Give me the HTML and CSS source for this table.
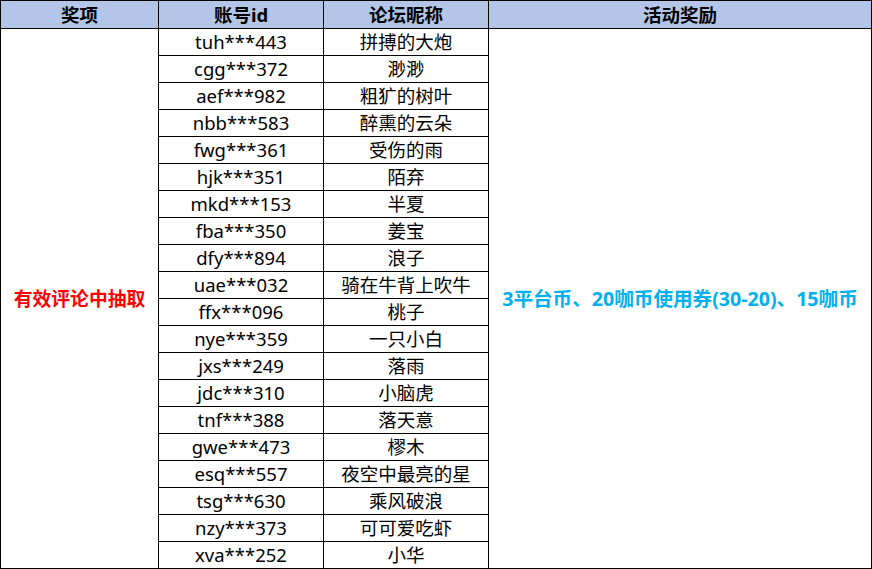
FILE: index.html
```html
<!DOCTYPE html>
<html lang="zh-CN">
<head>
<meta charset="utf-8">
<title>获奖名单</title>
<link rel="stylesheet" href="styles.css">
</head>
<body>
<table class="awards">
  <colgroup>
    <col class="c1"><col class="c2"><col class="c3"><col class="c4">
  </colgroup>
  <thead>
    <tr class="head"><th>奖项</th><th>账号id</th><th>论坛昵称</th><th>活动奖励</th></tr>
  </thead>
  <tbody>
    <tr><td class="prize" rowspan="20">有效评论中抽取</td><td>tuh***443</td><td>拼搏的大炮</td><td class="reward" rowspan="20">3平台币、20咖币使用券(30-20)、15咖币</td></tr>
    <tr><td>cgg***372</td><td>渺渺</td></tr>
    <tr><td>aef***982</td><td>粗犷的树叶</td></tr>
    <tr><td>nbb***583</td><td>醉熏的云朵</td></tr>
    <tr><td>fwg***361</td><td>受伤的雨</td></tr>
    <tr><td>hjk***351</td><td>陌弃</td></tr>
    <tr><td>mkd***153</td><td>半夏</td></tr>
    <tr><td>fba***350</td><td>姜宝</td></tr>
    <tr><td>dfy***894</td><td>浪子</td></tr>
    <tr><td>uae***032</td><td>骑在牛背上吹牛</td></tr>
    <tr><td>ffx***096</td><td>桃子</td></tr>
    <tr><td>nye***359</td><td>一只小白</td></tr>
    <tr><td>jxs***249</td><td>落雨</td></tr>
    <tr><td>jdc***310</td><td>小脑虎</td></tr>
    <tr><td>tnf***388</td><td>落天意</td></tr>
    <tr><td>gwe***473</td><td>樛木</td></tr>
    <tr><td>esq***557</td><td>夜空中最亮的星</td></tr>
    <tr><td>tsg***630</td><td>乘风破浪</td></tr>
    <tr><td>nzy***373</td><td>可可爱吃虾</td></tr>
    <tr><td>xva***252</td><td>小华</td></tr>
  </tbody>
</table>
</body>
</html>
```
FILE: styles.css
```css
html, body {
  margin: 0;
  padding: 0;
  background: #ffffff;
}
body {
  font-family: "Noto Sans", "Noto Sans CJK SC", sans-serif;
  color: #000000;
}
.awards {
  border-collapse: collapse;
  table-layout: fixed;
  width: 871px;
}
.c1 { width: 158px; }
.c2 { width: 165px; }
.c3 { width: 165px; }
.c4 { width: 383px; }
.awards th,
.awards td {
  border: 1px solid #000000;
  padding: 0;
  text-align: center;
  vertical-align: middle;
  font-size: 18.5px;
  line-height: 20px;
  white-space: nowrap;
}
.head th {
  height: 27px;
  background: #b4c6e7;
  font-weight: bold;
}
.awards tbody tr {
  height: 27px;
}
.awards td.prize {
  color: #ff0000;
  font-weight: bold;
  font-size: 18.8px;
}
.awards td.reward {
  color: #00b0f0;
  font-weight: bold;
  font-size: 19.6px;
}
```
